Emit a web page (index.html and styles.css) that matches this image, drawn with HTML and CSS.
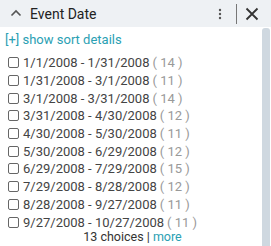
FILE: index.html
```html
<!DOCTYPE html>
<html>
<head>
<meta charset="utf-8">
<link rel="stylesheet" href="styles.css">
</head>
<body>
<div class="panel">
  <div class="header">
    <svg class="chev" width="12" height="8" viewBox="0 0 12 8"><path d="M1.5 6.5 L6 2 L10.5 6.5" fill="none" stroke="#555" stroke-width="1.6"/></svg>
    <span class="title">Event Date</span>
    <span class="spacer"></span>
    <svg class="kebab" width="4" height="12" viewBox="0 0 4 12"><circle cx="2" cy="2" r="1.2" fill="#555"/><circle cx="2" cy="6" r="1.2" fill="#555"/><circle cx="2" cy="10" r="1.2" fill="#555"/></svg>
    <span class="divider"></span>
    <svg class="close" width="14" height="14" viewBox="0 0 14 14"><path d="M1.5 1.5 L12.5 12.5 M12.5 1.5 L1.5 12.5" stroke="#333" stroke-width="1.8"/></svg>
  </div>
  <div class="body">
    <div class="content">
      <div class="sort">[+] show sort details</div>
      <ul class="list">
        <li><span class="cb"></span>1/1/2008 - 1/31/2008<span class="cnt">( 14 )</span></li>
        <li><span class="cb"></span>1/31/2008 - 3/1/2008<span class="cnt">( 11 )</span></li>
        <li><span class="cb"></span>3/1/2008 - 3/31/2008<span class="cnt">( 14 )</span></li>
        <li><span class="cb"></span>3/31/2008 - 4/30/2008<span class="cnt">( 12 )</span></li>
        <li><span class="cb"></span>4/30/2008 - 5/30/2008<span class="cnt">( 11 )</span></li>
        <li><span class="cb"></span>5/30/2008 - 6/29/2008<span class="cnt">( 12 )</span></li>
        <li><span class="cb"></span>6/29/2008 - 7/29/2008<span class="cnt">( 15 )</span></li>
        <li><span class="cb"></span>7/29/2008 - 8/28/2008<span class="cnt">( 12 )</span></li>
        <li><span class="cb"></span>8/28/2008 - 9/27/2008<span class="cnt">( 11 )</span></li>
        <li><span class="cb"></span>9/27/2008 - 10/27/2008<span class="cnt">( 11 )</span></li>
      </ul>
      <div class="footer">13 choices | <span class="more">more</span></div>
    </div>
    <div class="scroll"></div>
  </div>
</div>
</body>
</html>
```
FILE: styles.css
```css
* { box-sizing: border-box; }
html, body { margin: 0; padding: 0; background: #fff; }
body { font-family: Roboto, "Liberation Sans", sans-serif; width: 271px; height: 246px; overflow: hidden; }
.panel { width: 271px; height: 246px; display: flex; flex-direction: column; }
.header {
  height: 27px; background: #eef1f4; display: flex; align-items: center;
  padding-left: 10px; padding-right: 12px; flex: none;
}
.chev { margin-right: 8px; margin-top: -1px; }
.title { font-size: 14px; color: #222; }
.spacer { flex: 1; }
.kebab { margin-right: 14px; }
.divider { width: 1px; height: 20px; background: #777; margin-right: 8px; }
.close { display: block; }
.body { flex: 1; display: flex; min-height: 0; }
.content { flex: 1; padding-left: 5px; }
.sort { color: #2aa0b3; font-size: 13px; margin-top: 4px; height: 17px; line-height: 17px; }
.list { list-style: none; margin: 6px 0 0 0; padding: 0 0 0 3px; }
.list li {
  display: flex; align-items: center; height: 17.7px; font-size: 13px; color: #444;
}
.cb {
  width: 11px; height: 11px; border: 1px solid #666; border-radius: 2px;
  margin-right: 4px; flex: none; background: #fff;
}
.cnt { color: #999; margin-left: 3px; }
.footer { text-align: center; font-size: 12.5px; line-height: 15px; color: #333; margin-top: -2px; padding-right: 2px; }
.more { color: #2aa0b3; }
.scroll {
  width: 8px; margin: 1px 1px 0 0; background: #cfd8e0;
  border-radius: 3px 3px 0 0; flex: none;
}
```
